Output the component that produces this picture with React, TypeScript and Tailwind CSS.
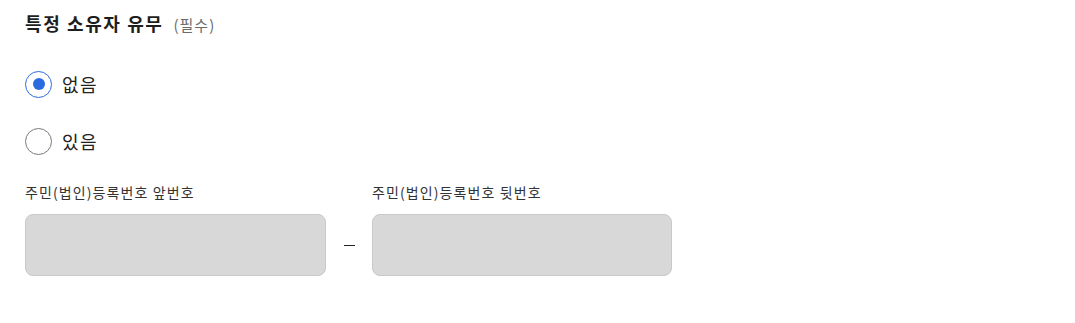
import React from "react";

const font = { fontFamily: '"Noto Sans CJK KR", "Noto Sans", sans-serif' };

function Radio({ checked, label }: { checked: boolean; label: string }) {
  return (
    <label className="flex items-center gap-[10px] h-[27px]">
      {checked ? (
        <span className="w-[27px] h-[27px] rounded-full border-[1.5px] border-[#2a6ce0] flex items-center justify-center">
          <span className="w-[12px] h-[12px] rounded-full bg-[#2a6ce0]" />
        </span>
      ) : (
        <span className="w-[27px] h-[27px] rounded-full border border-[#7a7a7a]" />
      )}
      <span className="text-[18px] leading-none text-[#222] tracking-[1.5px]">{label}</span>
    </label>
  );
}

export default function App() {
  return (
    <div className="w-[1075px] h-[323px] bg-white pl-[25px] pt-[10px]" style={font}>
      <div className="flex items-baseline gap-[10px]">
        <span className="text-[18px] font-bold text-[#1e1e1e] leading-[26px] tracking-[1.6px]">특정 소유자 유무</span>
        <span className="text-[15px] text-[#6b6b6b] tracking-[1px]">(필수)</span>
      </div>
      <div className="mt-[34px] flex flex-col gap-[30px]">
        <Radio checked label="없음" />
        <Radio checked={false} label="있음" />
      </div>
      <div className="mt-[27px] flex items-end">
        <div className="flex flex-col">
          <span className="text-[14px] leading-[20px] text-[#333] tracking-[1.1px]">주민(법인)등록번호 앞번호</span>
          <div className="mt-[12px] w-[301px] h-[62px] rounded-[8px] bg-[#d8d8d8] border border-[#c9c9c9]" />
        </div>
        <div className="w-[46px] h-[62px] flex items-center justify-center">
          <span className="block w-[11px] h-[1.5px] bg-[#222] mt-[2px]" />
        </div>
        <div className="flex flex-col">
          <span className="text-[14px] leading-[20px] text-[#333] tracking-[1.1px]">주민(법인)등록번호 뒷번호</span>
          <div className="mt-[12px] w-[300px] h-[62px] rounded-[8px] bg-[#d8d8d8] border border-[#c9c9c9]" />
        </div>
      </div>
    </div>
  );
}
